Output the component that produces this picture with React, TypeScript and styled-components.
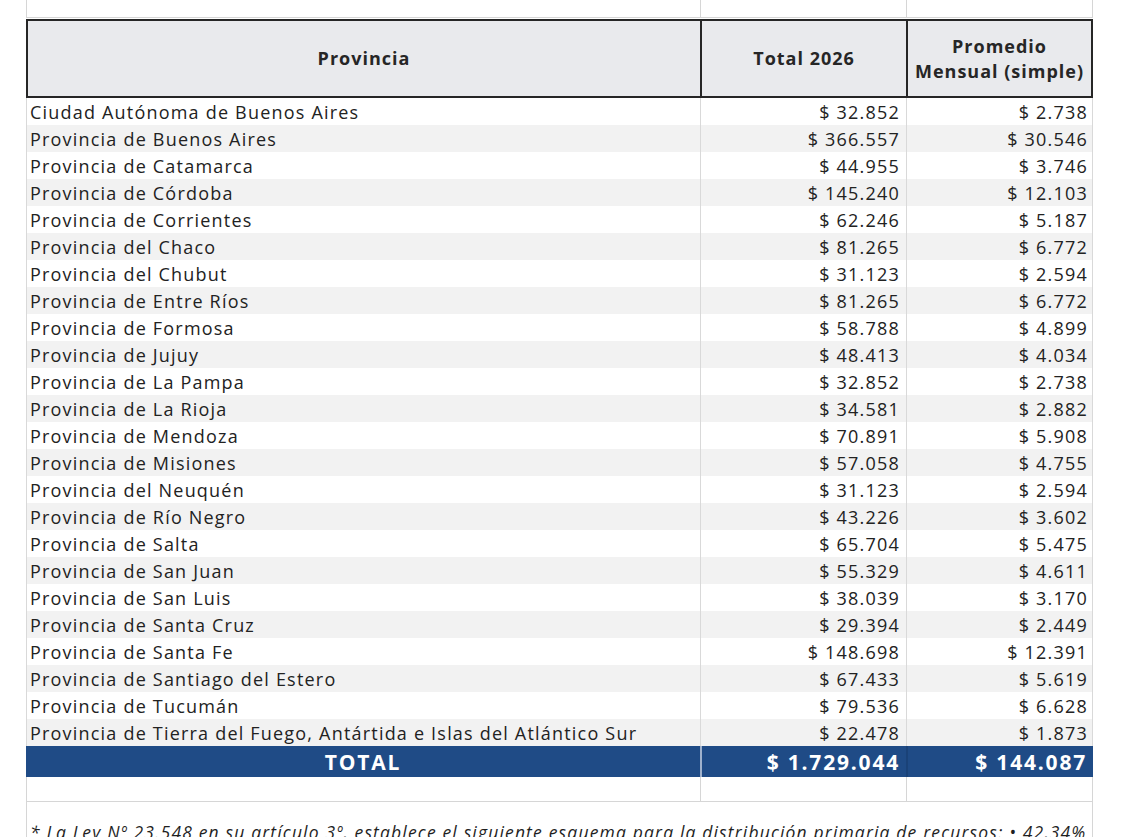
import React from "react";
import styled, { createGlobalStyle } from "styled-components";

const Global = createGlobalStyle`
  html, body { margin: 0; padding: 0; background: #ffffff; }
  body { font-family: "Open Sans", "Noto Sans", sans-serif; color: #1f1f1f; overflow: hidden; }
`;

const Page = styled.div`
  width: 1140px;
  height: 837px;
  overflow: hidden;
  padding-left: 26px;
  box-sizing: border-box;
`;

const Sheet = styled.div`
  width: 1067px;
  display: flex;
  flex-direction: column;
`;

const COLS = "674px 206px 187px";

const BlankRow = styled.div<{ $h: number }>`
  display: grid;
  grid-template-columns: ${COLS};
  height: ${(p) => p.$h}px;
  box-sizing: border-box;
  border-bottom: 1px solid #d6d6d6;
`;

const BlankCell = styled.div<{ $last?: boolean }>`
  border-left: 1px solid #d6d6d6;
  ${(p) => (p.$last ? "border-right: 1px solid #d6d6d6;" : "")}
`;

const Header = styled.div`
  display: grid;
  grid-template-columns: 672px 206px 185px;
  height: 79px;
  margin-top: 1px;
  box-sizing: border-box;
  border: 2px solid #262626;
  background: #e9eaed;
`;

const HeadCell = styled.div<{ $divider?: boolean }>`
  display: flex;
  align-items: center;
  justify-content: center;
  text-align: center;
  font-weight: 700;
  font-size: 18px;
  letter-spacing: 1px;
  line-height: 25px;
  color: #262626;
  white-space: nowrap;
  ${(p) => (p.$divider ? "border-left: 2px solid #262626;" : "")}
`;

const Row = styled.div<{ $alt: boolean }>`
  display: grid;
  grid-template-columns: ${COLS};
  height: 27px;
  background: ${(p) => (p.$alt ? "#f2f2f2" : "#ffffff")};
`;

const Cell = styled.div<{ $num?: boolean; $last?: boolean }>`
  display: flex;
  align-items: center;
  justify-content: ${(p) => (p.$num ? "flex-end" : "flex-start")};
  padding: 0 ${(p) => (p.$last ? 4 : 6)}px 0 3px;
  font-size: 18px;
  letter-spacing: 1.2px;
  white-space: nowrap;
  color: #222222;
  border-left: 1px solid #d9d9d9;
  ${(p) => (p.$last ? "border-right: 1px solid #d9d9d9;" : "")}
`;

const TotalRow = styled.div`
  display: grid;
  grid-template-columns: ${COLS};
  height: 31px;
  background: #1f4b86;
`;

const TotalCell = styled.div<{ $num?: boolean; $sep?: string }>`
  display: flex;
  align-items: center;
  justify-content: ${(p) => (p.$num ? "flex-end" : "center")};
  padding: 0 ${(p) => (p.$num ? 6 : 0)}px 0 0;
  color: #ffffff;
  font-weight: 700;
  font-size: 21px;
  letter-spacing: 1.8px;
  white-space: nowrap;
  ${(p) => (p.$sep ? `border-left: 2px solid ${p.$sep};` : "")}
`;

const Footnote = styled.div`
  height: 40px;
  border-left: 1px solid #d6d6d6;
  border-right: 1px solid #d6d6d6;
  padding: 18px 0 0 3px;
  font-style: italic;
  font-size: 17.5px;
  letter-spacing: 1.16px;
  white-space: nowrap;
  color: #1f1f1f;
`;

const data: [string, string, string][] = [
  ["Ciudad Autónoma de Buenos Aires", "$ 32.852", "$ 2.738"],
  ["Provincia de Buenos Aires", "$ 366.557", "$ 30.546"],
  ["Provincia de Catamarca", "$ 44.955", "$ 3.746"],
  ["Provincia de Córdoba", "$ 145.240", "$ 12.103"],
  ["Provincia de Corrientes", "$ 62.246", "$ 5.187"],
  ["Provincia del Chaco", "$ 81.265", "$ 6.772"],
  ["Provincia del Chubut", "$ 31.123", "$ 2.594"],
  ["Provincia de Entre Ríos", "$ 81.265", "$ 6.772"],
  ["Provincia de Formosa", "$ 58.788", "$ 4.899"],
  ["Provincia de Jujuy", "$ 48.413", "$ 4.034"],
  ["Provincia de La Pampa", "$ 32.852", "$ 2.738"],
  ["Provincia de La Rioja", "$ 34.581", "$ 2.882"],
  ["Provincia de Mendoza", "$ 70.891", "$ 5.908"],
  ["Provincia de Misiones", "$ 57.058", "$ 4.755"],
  ["Provincia del Neuquén", "$ 31.123", "$ 2.594"],
  ["Provincia de Río Negro", "$ 43.226", "$ 3.602"],
  ["Provincia de Salta", "$ 65.704", "$ 5.475"],
  ["Provincia de San Juan", "$ 55.329", "$ 4.611"],
  ["Provincia de San Luis", "$ 38.039", "$ 3.170"],
  ["Provincia de Santa Cruz", "$ 29.394", "$ 2.449"],
  ["Provincia de Santa Fe", "$ 148.698", "$ 12.391"],
  ["Provincia de Santiago del Estero", "$ 67.433", "$ 5.619"],
  ["Provincia de Tucumán", "$ 79.536", "$ 6.628"],
  ["Provincia de Tierra del Fuego, Antártida e Islas del Atlántico Sur", "$ 22.478", "$ 1.873"],
];

export default function App() {
  return (
    <Page>
      <Global />
      <Sheet>
        <BlankRow $h={18}>
          <BlankCell />
          <BlankCell />
          <BlankCell $last />
        </BlankRow>
        <Header>
          <HeadCell>Provincia</HeadCell>
          <HeadCell $divider>Total 2026</HeadCell>
          <HeadCell $divider>
            Promedio
            <br />
            Mensual (simple)
          </HeadCell>
        </Header>
        {data.map(([name, total, avg], i) => (
          <Row key={name} $alt={i % 2 === 1}>
            <Cell>{name}</Cell>
            <Cell $num>{total}</Cell>
            <Cell $num $last>{avg}</Cell>
          </Row>
        ))}
        <TotalRow>
          <TotalCell>TOTAL</TotalCell>
          <TotalCell $num $sep="#9fb1cc">$ 1.729.044</TotalCell>
          <TotalCell $num $sep="#1a4278">$ 144.087</TotalCell>
        </TotalRow>
        <BlankRow $h={25}>
          <BlankCell />
          <BlankCell />
          <BlankCell $last />
        </BlankRow>
        <Footnote>
          * La Ley Nº 23.548 en su artículo 3º, establece el siguiente esquema para la distribución primaria de recursos: • 42,34%
        </Footnote>
      </Sheet>
    </Page>
  );
}
